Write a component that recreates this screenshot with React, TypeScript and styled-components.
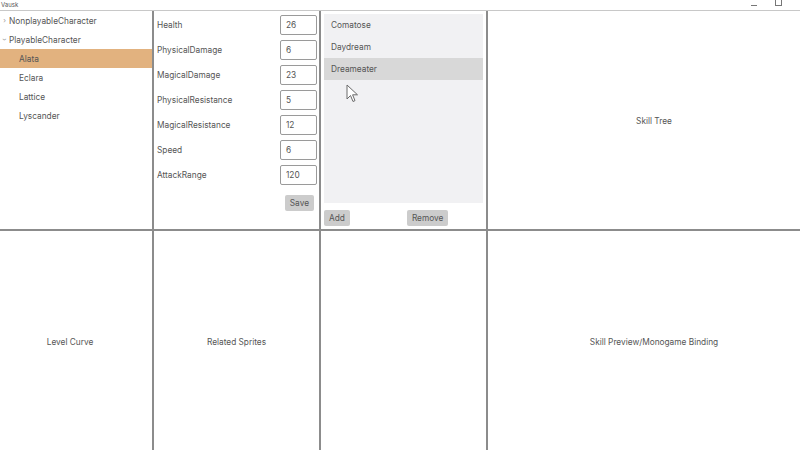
import styled, { createGlobalStyle } from 'styled-components';

const GlobalStyle = createGlobalStyle`
  html, body {
    margin: 0;
    padding: 0;
    background: #ffffff;
  }
  body {
    font-family: Inter, "Open Sans", "Liberation Sans", sans-serif;
    color: #555555;
  }
`;

const stats = [
  { label: 'Health', value: '26' },
  { label: 'PhysicalDamage', value: '6' },
  { label: 'MagicalDamage', value: '23' },
  { label: 'PhysicalResistance', value: '5' },
  { label: 'MagicalResistance', value: '12' },
  { label: 'Speed', value: '6' },
  { label: 'AttackRange', value: '120' },
];

const skills = ['Comatose', 'Daydream', 'Dreameater'];

const App = () => {
  return (
    <Window>
      <GlobalStyle />
      <TitleBar>
        <TitleText>Vausk</TitleText>
        <WindowControls>
          <Minimize />
          <Maximize />
        </WindowControls>
      </TitleBar>

      <Grid>
        <Panel>
          <TreeRow level={0}>
            <Chevron>›</Chevron>
            NonplayableCharacter
          </TreeRow>
          <TreeRow level={0}>
            <Chevron open>›</Chevron>
            PlayableCharacter
          </TreeRow>
          <TreeRow level={1} selected>Alata</TreeRow>
          <TreeRow level={1}>Eclara</TreeRow>
          <TreeRow level={1}>Lattice</TreeRow>
          <TreeRow level={1}>Lyscander</TreeRow>
        </Panel>

        <StatsPanel>
          {stats.map((s) => (
            <StatRow key={s.label}>
              <StatLabel>{s.label}</StatLabel>
              <StatInput defaultValue={s.value} />
            </StatRow>
          ))}
          <SaveRow>
            <GrayButton>Save</GrayButton>
          </SaveRow>
        </StatsPanel>

        <SkillsPanel>
          <SkillList>
            {skills.map((s) => (
              <SkillItem key={s} selected={s === 'Dreameater'}>
                {s}
              </SkillItem>
            ))}
            <Cursor width="13" height="19" viewBox="0 0 13 19">
              <path
                d="M1 1 L1 15 L4.5 11.5 L7 17.5 L9 16.6 L6.6 10.8 L11.5 10.8 Z"
                fill="#ffffff"
                stroke="#6a6a6a"
                strokeWidth="1"
                strokeLinejoin="round"
              />
            </Cursor>
          </SkillList>
          <ButtonRow>
            <GrayButton>Add</GrayButton>
            <GrayButton>Remove</GrayButton>
          </ButtonRow>
        </SkillsPanel>

        <CenterPanel last shift={20}>Skill Tree</CenterPanel>

        <CenterPanel bottom shift={-12}>Level Curve</CenterPanel>
        <CenterPanel bottom>Related Sprites</CenterPanel>
        <CenterPanel bottom />
        <CenterPanel bottom last shift={20}>Skill Preview/Monogame Binding</CenterPanel>
      </Grid>
    </Window>
  );
};

export default App;

const Window = styled.div`
  width: 800px;
  height: 450px;
  display: flex;
  flex-direction: column;
  overflow: hidden;
  font-size: 8.3px;
`;

const TitleBar = styled.div`
  height: 10px;
  display: flex;
  align-items: center;
  justify-content: space-between;
  border-bottom: 1px solid #c8c8c8;
  background: #ffffff;
`;

const TitleText = styled.span`
  font-size: 6px;
  color: #555;
  padding-left: 1px;
  line-height: 10px;
`;

const WindowControls = styled.div`
  display: flex;
  align-items: center;
  gap: 18px;
  padding-right: 18px;
`;

const Minimize = styled.span`
  width: 6px;
  height: 1px;
  background: #777;
`;

const Maximize = styled.span`
  width: 5px;
  height: 5px;
  border: 1px solid #777;
  border-top: none;
  margin-top: -4px;
`;

const Grid = styled.div`
  flex: 1;
  display: grid;
  grid-template-columns: 154px 167px 167px 1fr;
  grid-template-rows: 220px 1fr;
`;

const Panel = styled.div`
  position: relative;
  border-right: 2px solid #8c8c8c;
  border-bottom: 2px solid #8c8c8c;
  display: flex;
  flex-direction: column;
`;

const TreeRow = styled.div<{ level: number; selected?: boolean }>`
  height: 19px;
  display: flex;
  align-items: center;
  padding-left: ${(p) => (p.level === 0 ? 0 : 19)}px;
  font-size: 8.3px;
  color: #555;
  background: ${(p) => (p.selected ? '#e2b27f' : 'transparent')};
`;

const Chevron = styled.span<{ open?: boolean }>`
  width: 9px;
  font-size: 7px;
  color: #999;
  display: inline-flex;
  justify-content: center;
  transform: ${(p) => (p.open ? 'rotate(90deg)' : 'none')};
`;

const StatsPanel = styled(Panel)`
  padding: 1px 2px 0 3px;
`;

const StatRow = styled.div`
  height: 25px;
  display: flex;
  align-items: center;
  justify-content: space-between;
`;

const StatLabel = styled.span`
  font-size: 8.3px;
  color: #555;
`;

const StatInput = styled.input`
  width: 37px;
  height: 20px;
  box-sizing: border-box;
  border: 1px solid #9a9a9a;
  border-radius: 2px;
  font-family: inherit;
  font-size: 8.3px;
  color: #555;
  padding: 0 5px;
  outline: none;
`;

const SaveRow = styled.div`
  display: flex;
  justify-content: flex-end;
  padding: 8px 3px 0 0;
`;

const GrayButton = styled.button`
  height: 16px;
  padding: 0 5px;
  border: none;
  border-radius: 2px;
  background: #cccccc;
  font-family: inherit;
  font-size: 8.3px;
  color: #555;
  cursor: pointer;
`;

const SkillsPanel = styled(Panel)`
  padding: 3px 3px 0 3px;
`;

const SkillList = styled.div`
  position: relative;
  height: 189px;
  background: #f1f1f3;
  display: flex;
  flex-direction: column;
`;

const SkillItem = styled.div<{ selected?: boolean }>`
  height: 22px;
  display: flex;
  align-items: center;
  padding-left: 7px;
  font-size: 8.3px;
  color: #555;
  background: ${(p) => (p.selected ? '#d8d8d8' : 'transparent')};
`;

const Cursor = styled.svg`
  position: absolute;
  left: 22px;
  top: 70px;
`;

const ButtonRow = styled.div`
  display: flex;
  gap: 57px;
  padding-top: 7px;
`;

const CenterPanel = styled.div<{ bottom?: boolean; last?: boolean; shift?: number }>`
  display: flex;
  align-items: center;
  justify-content: center;
  border-right: ${(p) => (p.last ? 'none' : '2px solid #8c8c8c')};
  border-bottom: ${(p) => (p.bottom ? 'none' : '2px solid #8c8c8c')};
  font-size: 8.3px;
  color: #555;
  padding-top: ${(p) => (p.bottom ? 2 : 1)}px;
  padding-left: ${(p) => Math.max(p.shift ?? 0, 0)}px;
  padding-right: ${(p) => Math.max(-(p.shift ?? 0), 0)}px;
`;
